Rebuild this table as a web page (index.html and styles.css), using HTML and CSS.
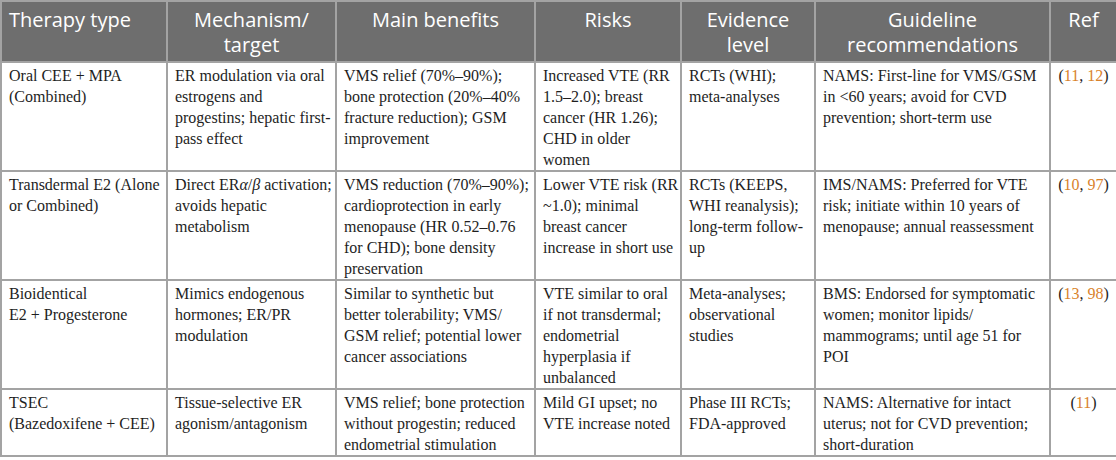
FILE: index.html
```html
<!DOCTYPE html>
<html lang="en">
<head>
<meta charset="utf-8">
<title>Menopausal hormone therapy comparison</title>
<link rel="stylesheet" href="styles.css">
</head>
<body>
<table class="tbl">
  <colgroup>
    <col class="c1"><col class="c2"><col class="c3"><col class="c4"><col class="c5"><col class="c6"><col class="c7">
  </colgroup>
  <thead>
    <tr>
      <th class="first">Therapy type</th>
      <th>Mechanism/<br>target</th>
      <th>Main benefits</th>
      <th>Risks</th>
      <th>Evidence<br>level</th>
      <th>Guideline<br>recommendations</th>
      <th>Ref</th>
    </tr>
  </thead>
  <tbody>
    <tr>
      <td>Oral CEE + MPA<br>(Combined)</td>
      <td>ER modulation via oral estrogens and progestins; hepatic first-pass effect</td>
      <td>VMS relief (70%–90%); bone protection (20%–40% fracture reduction); GSM improvement</td>
      <td>Increased VTE (RR 1.5–2.0); breast cancer (HR 1.26); CHD in older women</td>
      <td>RCTs (WHI); meta-analyses</td>
      <td>NAMS: First-line for VMS/GSM in &lt;60 years; avoid for CVD prevention; short-term use</td>
      <td class="ref">(<span class="lnk">11</span>, <span class="lnk">12</span>)</td>
    </tr>
    <tr>
      <td>Transdermal E2 (Alone or Combined)</td>
      <td>Direct ER<i class="gk">α</i>/<i class="gk">β</i> activation; avoids hepatic metabolism</td>
      <td>VMS reduction (70%–90%); cardioprotection in early menopause (HR 0.52–0.76 for CHD); bone density preservation</td>
      <td>Lower VTE risk (RR ~1.0); minimal breast cancer increase in short use</td>
      <td>RCTs (KEEPS, WHI reanalysis); long-term follow-up</td>
      <td>IMS/NAMS: Preferred for VTE risk; initiate within 10 years of menopause; annual reassessment</td>
      <td class="ref">(<span class="lnk">10</span>, <span class="lnk">97</span>)</td>
    </tr>
    <tr>
      <td>Bioidentical<br>E2 + Progesterone</td>
      <td>Mimics endogenous hormones; ER/PR modulation</td>
      <td>Similar to synthetic but better tolerability; VMS/ GSM relief; potential lower cancer associations</td>
      <td>VTE similar to oral if not transdermal; endometrial hyperplasia if unbalanced</td>
      <td>Meta-analyses; observational studies</td>
      <td>BMS: Endorsed for symptomatic women; monitor lipids/ mammograms; until age 51 for POI</td>
      <td class="ref">(<span class="lnk">13</span>, <span class="lnk">98</span>)</td>
    </tr>
    <tr>
      <td>TSEC<br>(Bazedoxifene + CEE)</td>
      <td>Tissue-selective ER agonism/antagonism</td>
      <td>VMS relief; bone protection without progestin; reduced endometrial stimulation</td>
      <td>Mild GI upset; no VTE increase noted</td>
      <td>Phase III RCTs; FDA-approved</td>
      <td>NAMS: Alternative for intact uterus; not for CVD prevention; short-duration</td>
      <td class="ref">(<span class="lnk">11</span>)</td>
    </tr>
  </tbody>
</table>
</body>
</html>
```
FILE: styles.css
```css
html, body {
  margin: 0;
  padding: 0;
  background: #ffffff;
}

.tbl {
  width: 1116px;
  border-collapse: collapse;
  table-layout: fixed;
  border: 2px solid #a3a3a3;
}

.c1 { width: 166px; }
.c2 { width: 169px; }
.c3 { width: 199px; }
.c4 { width: 146px; }
.c5 { width: 134px; }
.c6 { width: 235px; }
.c7 { width: 67px; }

.tbl th {
  background: #6e6e6e;
  color: #ffffff;
  font-family: "Open Sans", "Noto Sans", sans-serif;
  font-weight: 400;
  font-size: 20px;
  line-height: 25px;
  text-align: center;
  vertical-align: top;
  padding: 5px 2px 4px;
  border: 2px solid #a3a3a3;
}

.tbl th.first {
  text-align: left;
  padding-left: 7px;
}

.tbl td {
  font-family: "Liberation Serif", "Times New Roman", serif;
  font-size: 16px;
  line-height: 21px;
  color: #1e1e1e;
  vertical-align: top;
  text-align: left;
  padding: 2px 1px 0 7px;
  border: 2px solid #a3a3a3;
}

.tbl td.ref {
  text-align: center;
  padding-left: 1px;
  padding-right: 1px;
}

.gk {
  font-style: italic;
}

.lnk {
  color: #d9822b;
}
```
